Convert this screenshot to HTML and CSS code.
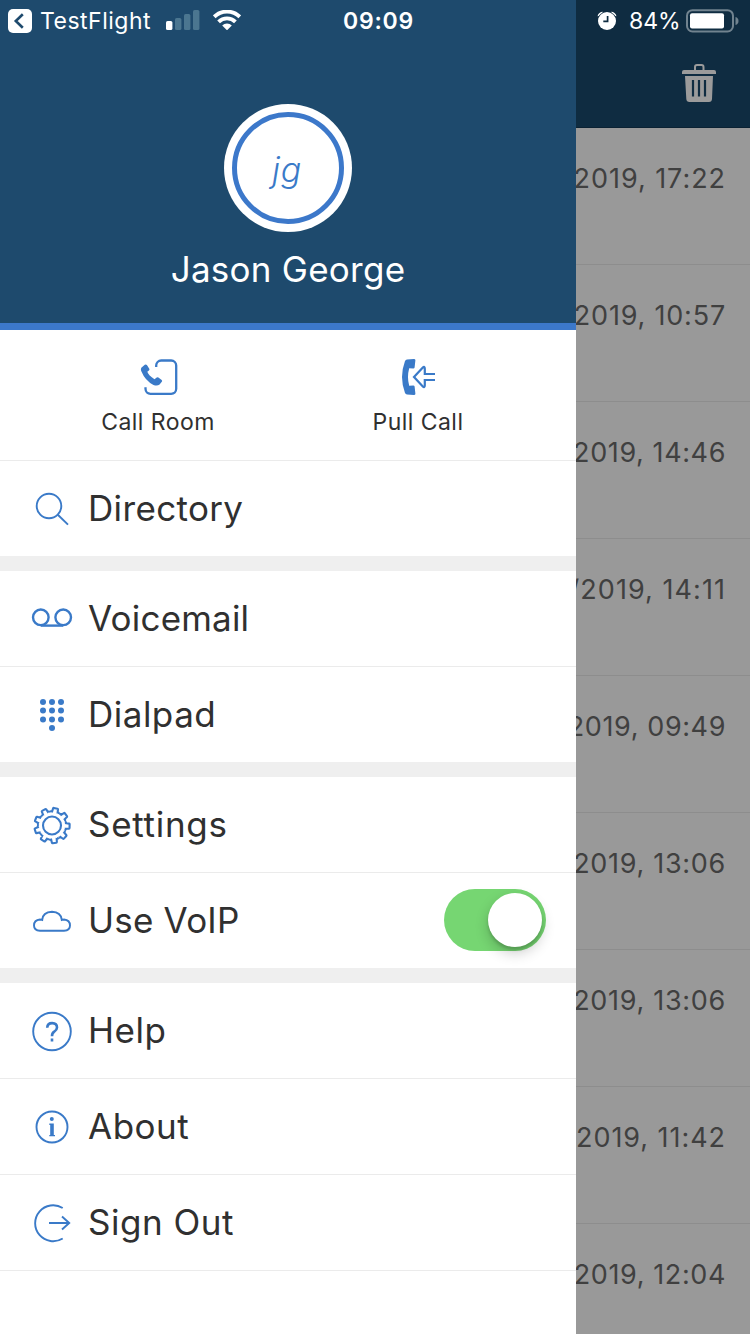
FILE: index.html
```html
<!DOCTYPE html>
<html lang="en">
<head>
<meta charset="utf-8">
<title>Menu</title>
<link rel="stylesheet" href="styles.css">
</head>
<body>
<div class="screen">
  <aside class="drawer">
    <header class="profile">
      <div class="status">
        <svg class="back" width="24" height="24" viewBox="0 0 24 24"><rect width="24" height="24" rx="5" fill="#fff"/><path d="M14.800 5.200 7.800 12l7 6.800" fill="none" stroke="#1e4a6d" stroke-width="2.600"/></svg>
        <span class="app">TestFlight</span>
        <svg class="signal" width="34" height="20" viewBox="0 0 34 20"><rect y="11" width="6.400" height="9" rx="1.600" fill="#fff"/><g fill="#4b7690"><rect x="9" y="8" width="6.400" height="12" rx="1.600"/><rect x="18" y="4" width="6.400" height="16" rx="1.600"/><rect x="27" width="6.400" height="20" rx="1.600"/></g></svg>
        <svg class="wifi" width="28" height="20" viewBox="0 0 28 20"><g fill="none" stroke="#fff" stroke-width="3.800"><path d="M1.200 6.800a18.200 18.200 0 0 1 25.600 0"/><path d="M5.600 11.800a11.800 11.800 0 0 1 16.800 0"/></g><path d="M9.200 15.600a6.600 6.600 0 0 1 9.600 0L14 20.300z" fill="#fff"/></svg>
        <span class="time">09:09</span>
      </div>
      <div class="avatar"><div class="ring"><span class="initials">jg</span></div></div>
      <div class="name">Jason George</div>
    </header>
    <section class="quick">
      <div class="action">
        <svg class="room-icon" width="40" height="40" viewBox="0 0 40 40"><path d="M16.200 10V8.500a5 5 0 0 1 5-5h10a5 5 0 0 1 5 5v23.300a5 5 0 0 1-5 5H10.500a5 5 0 0 1-5-5v-1.500" fill="none" stroke="#3a7ac8" stroke-width="2.300"/><path d="M1.300 10.800 4.800 7.700Q6 7 6.900 8.100L9.300 11.700Q9.800 12.700 8.900 13.400L7.300 14.800Q8.500 18.400 14.500 22.300L16.700 20.500Q17.500 19.900 18.400 20.500L21.700 22.900Q22.600 23.800 21.800 24.800L19.600 27.600Q17 29.300 13.500 27.900 5.300 24 1.200 14 .5 12 1.300 10.800z" fill="#3a7ac8"/></svg>
        <span class="caption room">Call Room</span>
      </div>
      <div class="action">
        <svg width="40" height="40" viewBox="0 0 40 40"><path d="M9 2.400 15.800 2Q17.500 2 17.400 3.200L16.600 10.500Q16.400 11.500 15.300 11.500L11.200 11.200Q8.800 20 11.200 28.800L15.300 28.400Q16.400 28.400 16.600 29.500L17.400 36.800Q17.500 38 15.800 38L9 37.600Q7.700 37.400 7 36 1 20 7 4 7.700 2.600 9 2.400z" fill="#3a7ac8"/><path d="M37 17H26.800V11.800Q26.800 8.600 24.600 10.800L16 20 24.600 29.200Q26.800 31.400 26.800 28.200V23H37" fill="none" stroke="#3a7ac8" stroke-width="2.200"/></svg>
        <span class="caption pull">Pull Call</span>
      </div>
    </section>
    <nav>
      <div class="group">
        <div class="row"><svg class="icon" viewBox="0 0 40 40"><circle cx="17" cy="17" r="12.300"/><path d="M25.800 25.800 36 35.600"/></svg><span class="label directory">Directory</span></div>
      </div>
      <div class="group">
        <div class="row"><svg class="icon heavy" viewBox="0 0 40 40"><circle cx="8.800" cy="18.300" r="7.800"/><circle cx="31.200" cy="18.300" r="7.800"/><path d="M8.800 26.600H31.200"/></svg><span class="label voicemail">Voicemail</span></div>
        <div class="row"><svg class="icon dots" viewBox="0 0 40 40"><circle cx="11" cy="7" r="3"/><circle cx="20" cy="7" r="3"/><circle cx="29" cy="7" r="3"/><circle cx="11" cy="15.500" r="3"/><circle cx="20" cy="15.500" r="3"/><circle cx="29" cy="15.500" r="3"/><circle cx="11" cy="24.500" r="3"/><circle cx="20" cy="24.500" r="3"/><circle cx="29" cy="24.500" r="3"/><circle cx="20" cy="33" r="3"/></svg><span class="label dialpad">Dialpad</span></div>
      </div>
      <div class="group">
        <div class="row"><svg class="icon gear" viewBox="0 0 40 40"><defs><path id="tooth" d="M-4.700-12.900Q-3.700-14.200-2.800-14L-2.500-17Q-2.400-17.600-1.800-17.600H1.800Q2.400-17.600 2.500-17L2.800-14Q3.700-14.200 4.700-12.900"/></defs><circle cx="20" cy="20.500" r="9"/><g transform="translate(20 20.500) rotate(12)"><use href="#tooth"/><use href="#tooth" transform="rotate(40)"/><use href="#tooth" transform="rotate(80)"/><use href="#tooth" transform="rotate(120)"/><use href="#tooth" transform="rotate(160)"/><use href="#tooth" transform="rotate(200)"/><use href="#tooth" transform="rotate(240)"/><use href="#tooth" transform="rotate(280)"/><use href="#tooth" transform="rotate(320)"/></g></svg><span class="label settings">Settings</span></div>
        <div class="row"><svg class="icon" viewBox="0 0 40 40"><path d="M8 29.800Q2 29.300 2 24.500 2 19 8 18.500 9.300 18.500 10.200 18.900 10.800 11.200 20 10.800 29 11.200 29.800 18.900 30.700 18.500 32 18.500 38 19 38 24.500 38 29.300 32 29.800z"/></svg><span class="label voip">Use VoIP</span><span class="toggle"><span class="knob"></span></span></div>
      </div>
      <div class="group">
        <div class="row"><svg class="icon" viewBox="0 0 40 40"><circle cx="20" cy="20.500" r="18.800"/><path class="thick" d="M15.200 16.700Q15.400 12.100 20.200 12.100 25 12.200 25 16.400 25 18.700 22.200 20.700 20 22.100 20 25.300M20 27.500v3"/></svg><span class="label help">Help</span></div>
        <div class="row"><svg class="icon" viewBox="0 0 40 40"><circle cx="20" cy="20" r="15.500"/><circle cx="19.800" cy="12" r="2" class="solid"/><path class="solid" d="M17.300 16.600H21.800V28H23V29.300H17.300V28H18.200V18H17.300z"/></svg><span class="label about">About</span></div>
        <div class="row last"><svg class="icon" viewBox="0 0 40 40"><path d="M30.700 5A18 18 0 1 0 30.700 35.500M17 20H37M30 13.500 37.200 20 30 26.500"/></svg><span class="label signout">Sign Out</span></div>
      </div>
    </nav>
  </aside>
  <main class="calls">
    <header class="toolbar">
      <div class="device">
        <svg width="20" height="20" viewBox="0 0 20 20"><g fill="#fff"><circle cx="10" cy="10" r="9"/><path d="M.5 5.200A6 6 0 0 1 6 .8L5 1.900Q3 3 1.700 5zM19.500 5.200A6 6 0 0 0 14 .8L15 1.900Q17 3 18.300 5z"/></g><path d="M10.600 5v5.300H6.300" fill="none" stroke="#0f2c41" stroke-width="1.700"/></svg>
        <span class="percent">84%</span>
        <svg class="battery" width="53" height="24" viewBox="0 0 53 24"><rect x="1" y="1.200" width="46" height="21.300" rx="5.500" fill="none" stroke="#71838f" stroke-width="2"/><rect x="4" y="4.300" width="34" height="15.200" rx="2" fill="#fff"/><path d="M49.500 8Q52.500 8.800 52.500 12T49.500 16z" fill="#71838f"/></svg>
      </div>
      <svg class="trash" width="34" height="38" viewBox="0 0 34 38"><path d="M13 6V3Q13 1 15 1h4.500q2 0 2 2v3" fill="none" stroke="#9b9b9b" stroke-width="2"/><path fill="#9b9b9b" d="M0 10V8q0-2 2-2h30q2 0 2 2v2zM3 12H31L30 35q-.2 3-3 3H7.500q-3 0-3.200-3z"/><path d="M11 16v16.500M17 16v16.500M23 16v16.500" stroke="#0f2c41" stroke-width="2.200"/></svg>
    </header>
    <div class="call"><span class="date d1">2019, 17:22</span></div>
    <div class="call"><span class="date d2">2019, 10:57</span></div>
    <div class="call"><span class="date">2019, 14:46</span></div>
    <div class="call"><span class="date d4">/2019, 14:11</span></div>
    <div class="call"><span class="date">2019, 09:49</span></div>
    <div class="call"><span class="date d6">2019, 13:06</span></div>
    <div class="call"><span class="date d6">2019, 13:06</span></div>
    <div class="call"><span class="date d8">2019, 11:42</span></div>
    <div class="call"><span class="date">2019, 12:04</span></div>
  </main>
</div>
</body>
</html>
```
FILE: styles.css
```css
* { box-sizing: border-box; }
body { margin: 0; font-family: Inter, "Liberation Sans", sans-serif; color: #303030; }
svg { display: block; flex: none; }
.screen { display: flex; width: 750px; height: 1334px; overflow: hidden; background: #fff; }
.drawer { flex: none; width: 576px; background: #fff; }

.profile { display: flex; flex-direction: column; align-items: center; height: 330px; background: #1e4a6d; border-bottom: 7px solid #3c78ca; color: #fff; }
.status { display: flex; align-items: center; width: 100%; height: 42px; padding-left: 8px; font-size: 23px; }
.app { width: 126px; margin-left: 8px; letter-spacing: .5px; }
.signal { margin-top: -2px; }
.wifi { margin-left: 13px; margin-top: -2px; }
.time { margin-left: 102px; font-weight: 600; letter-spacing: .8px; }
.avatar { width: 128px; height: 128px; margin-top: 62px; padding: 8px; border-radius: 50%; background: #fff; }
.ring { display: flex; align-items: center; justify-content: center; height: 112px; border: 5px solid #3c78ca; border-radius: 50%; }
.initials { padding-top: 2px; margin-left: -2px; font-size: 34px; letter-spacing: .8px; font-style: italic; font-weight: 300; color: #3a7ac8; }
.name { margin-top: 15px; font-size: 35px; line-height: 44px; letter-spacing: .25px; }

.quick { display: flex; justify-content: space-between; height: 131px; padding: 27px 28px 0; border-bottom: 1px solid #ebebeb; }
.action { display: flex; flex-direction: column; align-items: center; width: 260px; }
.room-icon { margin-left: 3px; }
.caption { margin-top: 10px; font-size: 23px; line-height: 30px; letter-spacing: .45px; white-space: nowrap; }

.group + .group { border-top: 15px solid #efefef; }
.row { display: flex; align-items: center; height: 95px; padding: 0 30px 0 32px; }
.row + .row { height: 96px; border-top: 1px solid #ebebeb; }
.row.last { height: 97px; border-bottom: 1px solid #ebebeb; }
.icon { width: 40px; height: 40px; fill: none; stroke: #3a7ac8; stroke-width: 1.9; overflow: visible; }
.heavy { stroke-width: 2.4; }
.gear { stroke-width: 2.1; }
.thick { stroke-width: 2.6; }
.dots, .solid { fill: #3a7ac8; stroke: none; }
.label { margin-left: 16px; padding-bottom: 2px; font-size: 35px; line-height: 44px; letter-spacing: .5px; white-space: nowrap; }
.directory { letter-spacing: .35px; }
.voicemail { letter-spacing: .2px; }
.settings { letter-spacing: .7px; }
.voip { letter-spacing: .2px; }
.toggle { display: flex; justify-content: flex-end; width: 102px; height: 62px; margin: -2px 0 0 auto; padding: 4px; border-radius: 31px; background: #76d672; }
.knob { width: 54px; height: 54px; border-radius: 50%; background: #fff; box-shadow: 0 6px 14px rgba(0,0,0,.2), 0 3px 3px rgba(0,0,0,.14); }

.calls { flex: none; width: 174px; background: #999; overflow: hidden; }
.toolbar { height: 128px; background: #0f2c41; border-bottom: 1px solid #0b2233; }
.device { display: flex; align-items: center; height: 42px; padding-left: 21px; color: #fff; }
.percent { width: 57px; margin-left: 12px; font-size: 23px; }
.battery { margin-top: -1px; }
.trash { margin: 22px 0 0 106px; }
.call { display: flex; justify-content: flex-end; height: 137px; padding: 34px 24px 0 0; border-bottom: 1px solid #8d8d8d; }
.date { flex: none; font-size: 27px; line-height: 34px; letter-spacing: .6px; color: #404040; white-space: nowrap; }
.d1 { letter-spacing: .95px; }
.d2 { letter-spacing: .8px; }
.d4 { letter-spacing: 1.05px; }
.d6 { letter-spacing: .7px; }
.d8 { letter-spacing: .95px; }
```
